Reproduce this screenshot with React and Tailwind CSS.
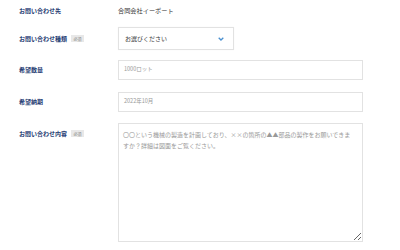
export default function App() {
    const font = { fontFamily: '"Noto Sans CJK JP", "Noto Sans", sans-serif' };

    const Badge = () => (
        <span className="ml-[4px] inline-flex h-[7px] w-[13px] items-center justify-center bg-[#e8e8e8] text-[4px] leading-none text-[#888]">
            必須
        </span>
    );

    const Label = ({ children, required }) => (
        <div className="flex w-[99px] shrink-0 items-center">
            <span className="text-[6px] font-bold leading-none text-[#1f3c73]">{children}</span>
            {required && <Badge />}
        </div>
    );

    return (
        <div className="h-[250px] w-[400px] bg-white pl-[19px]" style={font}>
            {/* Company */}
            <div className="flex h-[22px] items-center">
                <Label>お問い合わせ先</Label>
                <span className="text-[6.2px] leading-none text-[#333]">合同会社イーポート</span>
            </div>

            {/* Inquiry type */}
            <div className="mt-[5px] flex h-[23px] items-center">
                <Label required>お問い合わせ種類</Label>
                <div className="flex h-[23px] w-[116px] items-center justify-between border border-[#e2e2e2] pl-[6px] pr-[9px] shadow-[0_0_1px_rgba(0,0,0,0.05)]">
                    <span className="text-[6px] leading-none text-[#333]">お選びください</span>
                    <svg width="6" height="4" viewBox="0 0 6 4" className="mt-[1px]">
                        <polyline points="0.7,0.7 3,3 5.3,0.7" fill="none" stroke="#4a90d0" strokeWidth="1.3" />
                    </svg>
                </div>
            </div>

            {/* Quantity */}
            <div className="mt-[10px] flex h-[20px] items-center">
                <Label>希望数量</Label>
                <div className="flex h-[20px] w-[245px] items-center border border-[#e2e2e2] pl-[5px]">
                    <span className="text-[5.5px] leading-none text-[#999]">1000ロット</span>
                </div>
            </div>

            {/* Delivery */}
            <div className="mt-[12px] flex h-[20px] items-center">
                <Label>希望納期</Label>
                <div className="flex h-[20px] w-[245px] items-center border border-[#e2e2e2] pl-[5px]">
                    <span className="text-[5.5px] leading-none text-[#999]">2022年10月</span>
                </div>
            </div>

            {/* Message */}
            <div className="mt-[11px] flex">
                <div className="pt-[7px]">
                    <Label required>お問い合わせ内容</Label>
                </div>
                <textarea
                    className="h-[119px] w-[245px] resize border border-[#e2e2e2] pl-[4px] pr-[7px] pt-[5px] text-[6px] leading-[11px] text-[#999] outline-none"
                    style={font}
                    readOnly
                    defaultValue="〇〇という機械の製造を計画しており、××の箇所の▲▲部品の製作をお願いできますか？詳細は図面をご覧ください。"
                />
            </div>
        </div>
    );
}
